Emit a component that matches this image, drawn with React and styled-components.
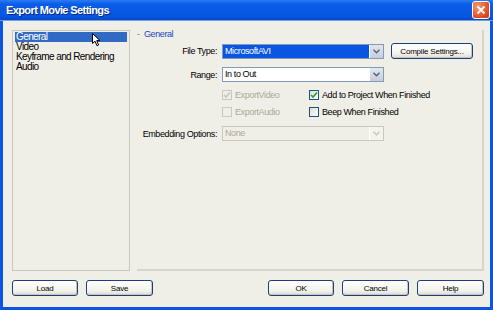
import styled, {createGlobalStyle} from 'styled-components';

const GlobalStyle = createGlobalStyle`
  html, body { margin: 0; padding: 0; background: #0a4fd6; }
  * { box-sizing: border-box; }
`;

const Window = styled.div`
  width: 493px;
  height: 310px;
  display: flex;
  flex-direction: column;
  background: #0a55e2;
  font-family: "Liberation Sans", Arial, sans-serif;
  font-size: 9px;
  letter-spacing: -0.4px;
  white-space: nowrap;
  color: #000;
  overflow: hidden;
`;

const TitleBar = styled.div`
  height: 21px;
  display: flex;
  align-items: center;
  justify-content: space-between;
  padding: 0 3px 0 6px;
  background: linear-gradient(#2a7bf4 0%, #0a5ee6 20%, #0655e2 80%, #0848c8 100%);
  border-bottom: 1px solid #6d9ef0;
`;

const Title = styled.span`
  color: #fff;
  font-weight: bold;
  font-size: 11px;
  letter-spacing: -0.6px;
  text-shadow: 1px 1px 0 #0a2a80;
`;

const CloseButton = styled.div`
  width: 18px;
  height: 18px;
  border-radius: 3px;
  border: 1px solid #fff;
  background: radial-gradient(circle at 30% 30%, #f09a78, #e04a20 70%, #c8380e);
  display: flex;
  align-items: center;
  justify-content: center;
`;

const Body = styled.div`
  flex: 1;
  margin: 0 3px 3px 3px;
  background: #f0efe7;
  display: flex;
  flex-direction: column;
  padding: 9px 6px 11px 9px;
`;

const Content = styled.div`
  flex: 1;
  display: flex;
  gap: 7px;
`;

const ListBox = styled.ul`
  width: 118px;
  margin: 0;
  padding: 1px 2px;
  list-style: none;
  border: 1px solid #c9c8bd;
  position: relative;
`;

const ListItem = styled.li`
  height: 10px;
  line-height: 10px;
  font-size: 10px;
  letter-spacing: -0.6px;
  padding-left: 1px;
  ${(p) => p.selected && 'background: #316ac5; color: #fff;'}
`;

const Cursor = styled.svg`
  position: absolute;
  left: 79px;
  top: 2px;
`;

const GroupBox = styled.div`
  flex: 1;
  border-right: 2px solid #d6d5cc;
  border-bottom: 2px solid #d6d5cc;
  display: flex;
  flex-direction: column;
`;

const Legend = styled.div`
  display: flex;
  align-items: center;
  gap: 4px;
  height: 8px;
  color: #1846c8;
  font-size: 9px;
  line-height: 8px;
  &::before {
    content: '';
    width: 3px;
    height: 1px;
    background: #aaa;
  }
`;

const FormRow = styled.div`
  display: flex;
  align-items: center;
  gap: 5px;
  margin-top: ${(p) => p.top || 0}px;
`;

const Label = styled.span`
  width: 80px;
  text-align: right;
  color: ${(p) => (p.disabled ? '#444' : '#000')};
`;

const Select = styled.div`
  width: 162px;
  height: 15px;
  display: flex;
  border: 1px solid ${(p) => (p.disabled ? '#c9c7ba' : '#7f9db9')};
  background: ${(p) => (p.disabled ? '#f0efe7' : '#fff')};
`;

const SelectValue = styled.span`
  flex: 1;
  padding-left: 2px;
  line-height: 13px;
  ${(p) => p.highlight && 'background: #0a55e2; color: #fff;'}
  ${(p) => p.disabled && 'color: #aca899;'}
`;

const DropButton = styled.span`
  width: 14px;
  display: flex;
  align-items: center;
  justify-content: center;
  background: ${(p) => (p.disabled ? '#f4f3ee' : 'linear-gradient(#e3e6ef, #c7ccd8)')};
  border-left: 1px solid #fff;
`;

const Button = styled.button`
  height: 16px;
  width: ${(p) => p.w || 66}px;
  padding: 0;
  font-family: inherit;
  font-size: 8px;
  letter-spacing: -0.2px;
  color: #000;
  border: 1px solid #1b3f78;
  border-radius: 3px;
  background: linear-gradient(#ffffff, #f3f2ec 70%, #dcdad0);
  box-shadow: inset -1px -1px 0 #c8c6bb;
`;

const CheckRow = styled.div`
  display: flex;
  margin-left: 85px;
  margin-top: ${(p) => p.top || 0}px;
  height: 10px;
`;

const CheckItem = styled.label`
  display: flex;
  align-items: center;
  gap: 3px;
  width: ${(p) => p.w || 'auto'};
  color: ${(p) => (p.disabled ? '#aca899' : '#000')};
`;

const Box = styled.span`
  width: 10px;
  height: 10px;
  border: 1px solid ${(p) => (p.disabled ? '#cac8bb' : '#1c5180')};
  background: ${(p) => (p.disabled ? '#f0efe7' : 'linear-gradient(135deg, #dcdcd7, #fff)')};
  display: flex;
  align-items: center;
  justify-content: center;
`;

const ButtonRow = styled.div`
  display: flex;
  margin-top: 9px;
  gap: 8px;
`;

const Spacer = styled.div`
  flex: 1;
`;

const Check = ({color}) => (
  <svg width="8" height="8" viewBox="0 0 8 8">
    <path d="M1 4 L3 6 L7 1.5" stroke={color} strokeWidth="1.6" fill="none" />
  </svg>
);

const Chevron = ({color}) => (
  <svg width="7" height="5" viewBox="0 0 7 5">
    <path d="M0.5 0.8 L3.5 3.8 L6.5 0.8" stroke={color} strokeWidth="1.4" fill="none" />
  </svg>
);

const App = () => (
  <>
    <GlobalStyle />
    <Window>
      <TitleBar>
        <Title>Export Movie Settings</Title>
        <CloseButton>
          <svg width="10" height="10" viewBox="0 0 10 10">
            <path d="M1.5 1.5 L8.5 8.5 M8.5 1.5 L1.5 8.5" stroke="#fff" strokeWidth="1.8" />
          </svg>
        </CloseButton>
      </TitleBar>
      <Body>
        <Content>
          <ListBox>
            <ListItem selected>General</ListItem>
            <ListItem>Video</ListItem>
            <ListItem>Keyframe and Rendering</ListItem>
            <ListItem>Audio</ListItem>
            <Cursor width="10" height="14" viewBox="0 0 10 14">
              <path d="M0.5 0.5 L0.5 10.5 L3 8.2 L5 12.8 L6.6 12 L4.7 7.6 L8 7.6 Z" fill="#fff" stroke="#000" strokeWidth="1" />
            </Cursor>
          </ListBox>
          <GroupBox>
            <Legend>General</Legend>
            <FormRow top={5}>
              <Label>File Type:</Label>
              <Select>
                <SelectValue highlight>MicrosoftAVI</SelectValue>
                <DropButton><Chevron color="#4d6185" /></DropButton>
              </Select>
              <Button w={82} style={{marginLeft: 2}}>Compile Settings...</Button>
            </FormRow>
            <FormRow top={8}>
              <Label>Range:</Label>
              <Select>
                <SelectValue>In to Out</SelectValue>
                <DropButton><Chevron color="#4d6185" /></DropButton>
              </Select>
            </FormRow>
            <CheckRow top={8}>
              <CheckItem w="87px" disabled>
                <Box disabled><Check color="#c9c7ba" /></Box>
                ExportVideo
              </CheckItem>
              <CheckItem>
                <Box><Check color="#21a121" /></Box>
                Add to Project When Finished
              </CheckItem>
            </CheckRow>
            <CheckRow top={7}>
              <CheckItem w="87px" disabled>
                <Box disabled />
                ExportAudio
              </CheckItem>
              <CheckItem>
                <Box />
                Beep When Finished
              </CheckItem>
            </CheckRow>
            <FormRow top={9}>
              <Label>Embedding Options:</Label>
              <Select disabled>
                <SelectValue disabled>None</SelectValue>
                <DropButton disabled><Chevron color="#c9c7ba" /></DropButton>
              </Select>
            </FormRow>
          </GroupBox>
        </Content>
        <ButtonRow>
          <Button>Load</Button>
          <Button w={67}>Save</Button>
          <Spacer />
          <Button>OK</Button>
          <Button w={67}>Cancel</Button>
          <Button w={67}>Help</Button>
        </ButtonRow>
      </Body>
    </Window>
  </>
);

export default App;
